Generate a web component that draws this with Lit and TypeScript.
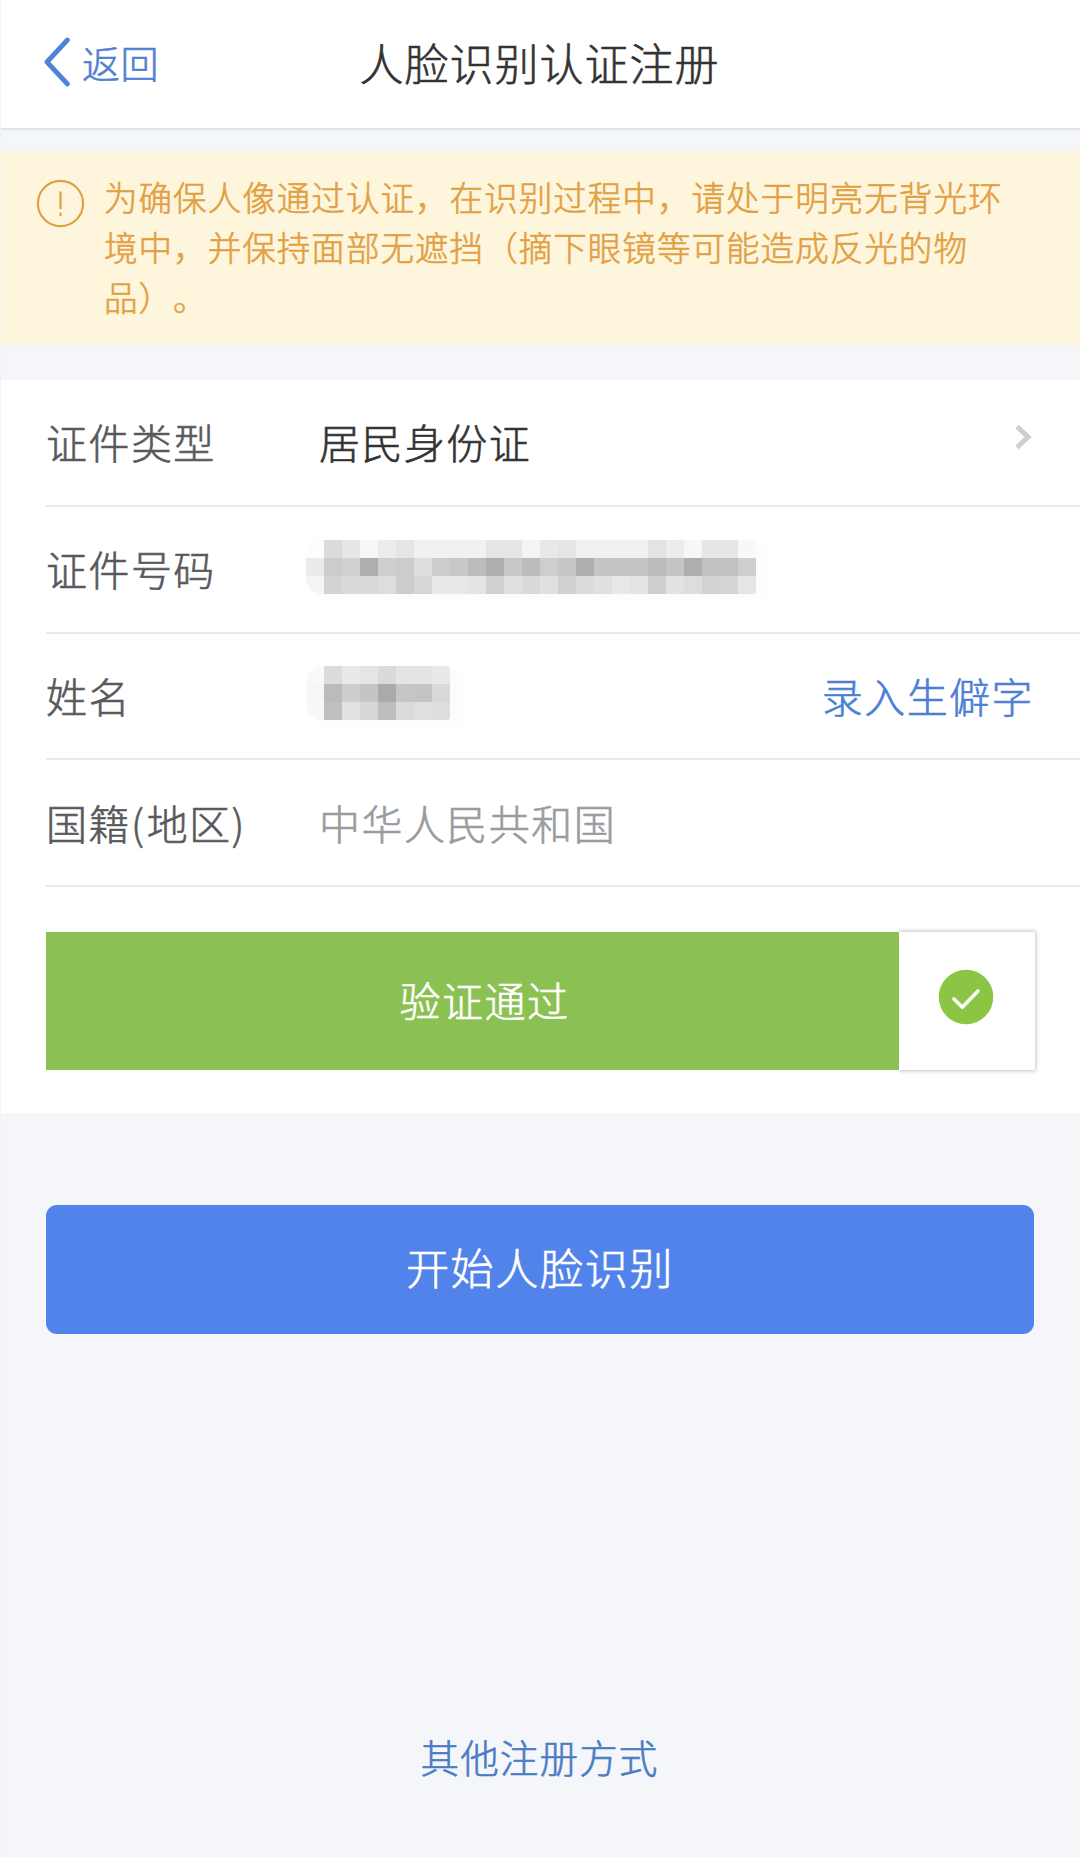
import { LitElement, html, css, svg } from "lit";
import { customElement, property } from "lit/decorators.js";

const NUMBER_MOSAIC: number[][] = [
  [253, 219, 230, 246, 236, 229, 240, 241, 241, 241, 229, 229, 244, 232, 229, 241, 241, 241, 241, 227, 236, 247, 230, 230, 248],
  [235, 204, 209, 174, 207, 204, 222, 204, 200, 188, 174, 200, 188, 206, 198, 174, 197, 197, 197, 188, 197, 174, 193, 193, 206],
  [245, 211, 218, 218, 221, 205, 215, 233, 232, 228, 208, 224, 217, 224, 209, 220, 224, 232, 228, 207, 226, 221, 210, 213, 229],
];

const NAME_MOSAIC: number[][] = [
  [249, 220, 232, 229, 218, 228, 228, 233],
  [247, 187, 205, 197, 170, 198, 196, 217],
  [248, 192, 225, 215, 190, 219, 224, 222],
];

@customElement("masked-value")
export class MaskedValue extends LitElement {
  @property({ attribute: false }) cells: number[][] = [];

  static styles = css`
    :host { display: block; }
    .mosaic {
      display: block;
      border-radius: 16px 3px 3px 16px;
      box-shadow: 8px 4px 12px 2px rgba(0, 0, 0, 0.015);
    }
  `;

  render() {
    const cols = this.cells[0]?.length ?? 0;
    const w = cols * 18;
    return html`<svg class="mosaic" width=${w} height="54" viewBox="0 0 ${w} 54" shape-rendering="crispEdges">
      ${this.cells.map((row, r) => row.map((v, c) => svg`<rect x=${c * 18} y=${r * 18} width="18" height="18" fill="rgb(${v},${v},${v})"></rect>`))}
    </svg>`;
  }
}

@customElement("app-root")
export class AppRoot extends LitElement {
  static styles = css`
    :host {
      display: flex;
      flex-direction: column;
      box-sizing: border-box;
      width: 1080px;
      height: 1857px;
      overflow: hidden;
      background: #f4f6fa;
      border-left: 1px solid #f1f3f7;
      font-family: "Noto Sans CJK SC", sans-serif;
      font-weight: 300;
      -webkit-text-stroke: 0.6px currentColor;
      font-size: 41px;
      letter-spacing: 1.45px;
      line-height: 60px;
      white-space: nowrap;
      text-spacing-trim: space-all;
    }
    svg { flex: none; }
    .header {
      display: grid;
      grid-template-columns: 1fr auto 1fr;
      align-items: center;
      height: 128px;
      padding: 0 44px 0 42px;
      background: #fff;
      border-bottom: 2px solid #dfe2e8;
      flex: none;
    }
    .back {
      display: flex;
      align-items: center;
      gap: 12px;
      color: #5080cf;
      font-size: 38px;
      letter-spacing: 0.6px;
      padding-bottom: 5px;
    }
    .title {
      margin: 0;
      font-size: 44px;
      font-weight: 300;
      letter-spacing: 1px;
      color: #333;
      padding-bottom: 5px;
    }
    .notice {
      display: flex;
      gap: 19px;
      box-sizing: border-box;
      height: 194px;
      margin-top: 21px;
      padding: 21px 0 0 35px;
      background: #fdf6dc;
      color: #e2a044;
      font-size: 33.6px;
      letter-spacing: 0.98px;
      line-height: 50px;
      flex: none;
    }
    .notice-icon { margin-top: 7px; }
    .notice-text { margin: 0; }
    .panel {
      margin-top: 35px;
      height: 733px;
      background: #fff;
      flex: none;
    }
    .row {
      display: grid;
      grid-template-columns: 273px 1fr auto;
      align-items: center;
      box-sizing: border-box;
      height: 126.8px;
      margin-left: 45px;
      padding: 0 46px 2px 0;
      border-bottom: 2px solid #e9e9ea;
    }
    .label { color: #58595d; }
    .paren { letter-spacing: 2.8px; }
    .value { color: #333; }
    .muted { color: #999c9f; }
    .link { color: #4b7fd6; }
    .number { margin: 0 0 2px -13px; }
    .name { margin: 0 0 3px -13px; }
    .chevron { margin: 0 2px 9px 0; }
    .verify {
      display: flex;
      height: 138px;
      margin: 45px 45px 0 45px;
    }
    .passed {
      display: flex;
      align-items: center;
      justify-content: center;
      box-sizing: border-box;
      width: 853px;
      padding: 0 0 4px 24px;
      background: #8bc152;
      color: #fff;
    }
    .status {
      display: flex;
      justify-content: center;
      flex: 1;
      padding: 37px 2px 0 0;
      box-shadow: 0 0 4px 1px rgba(0, 0, 0, 0.24);
      clip-path: inset(-6px -6px -6px 0);
      background: #fff;
    }
    .start {
      display: block;
      height: 129px;
      margin: 92px 46px 0 45px;
      padding: 0 0 8px 0;
      border: 0;
      border-radius: 11px;
      background: #5283ea;
      color: #fff;
      font: inherit;
      font-size: 43.2px;
      letter-spacing: 1.5px;
      flex: none;
    }
    .other {
      margin: auto 2px 71px 0;
      text-align: center;
      color: #4b7cc4;
      font-size: 38.6px;
      letter-spacing: 1.1px;
    }
  `;

  render() {
    return html`
      <header class="header">
        <div class="back">
          <svg width="27" height="50" viewBox="0 0 27 50" fill="none" stroke="#5082d6" stroke-width="4.8" stroke-linecap="round" stroke-linejoin="round">
            <path d="M24.4 3 L4 25 L24.4 47"></path>
          </svg>
          <span>返回</span>
        </div>
        <h1 class="title">人脸识别认证注册</h1>
      </header>

      <section class="notice">
        <svg class="notice-icon" width="49" height="49" viewBox="0 0 49 49" fill="none" stroke="#e2a044" stroke-width="2.2">
          <circle cx="24.5" cy="24.5" r="22.6"></circle>
          <path d="M24.5 12.5 V30 M24.5 33.5 V37"></path>
        </svg>
        <p class="notice-text">为确保人像通过认证，在识别过程中，请处于明亮无背光环<br />境中，并保持面部无遮挡（摘下眼镜等可能造成反光的物<br />品）。</p>
      </section>

      <section class="panel">
        <div class="row">
          <span class="label">证件类型</span>
          <span class="value">居民身份证</span>
          <svg class="chevron" width="17" height="26" viewBox="0 0 17 26" fill="none" stroke="#cecece" stroke-width="5">
            <path d="M2 2.5 L13 13 L2 23.5"></path>
          </svg>
        </div>
        <div class="row">
          <span class="label">证件号码</span>
          <masked-value class="number" .cells=${NUMBER_MOSAIC}></masked-value>
        </div>
        <div class="row">
          <span class="label">姓名</span>
          <masked-value class="name" .cells=${NAME_MOSAIC}></masked-value>
          <span class="link">录入生僻字</span>
        </div>
        <div class="row">
          <span class="label">国籍<span class="paren">(</span>地区<span class="paren">)</span></span>
          <span class="muted">中华人民共和国</span>
        </div>
        <div class="verify">
          <div class="passed">验证通过</div>
          <div class="status">
            <svg width="56" height="56" viewBox="0 0 56 56" fill="none">
              <circle cx="28" cy="28" r="27.3" fill="#8bc544"></circle>
              <path d="M16 30 L24.3 38.2 L40 22" stroke="#fff" stroke-width="3.6" stroke-linecap="round" stroke-linejoin="round"></path>
            </svg>
          </div>
        </div>
      </section>

      <button class="start">开始人脸识别</button>
      <div class="other">其他注册方式</div>
    `;
  }
}
